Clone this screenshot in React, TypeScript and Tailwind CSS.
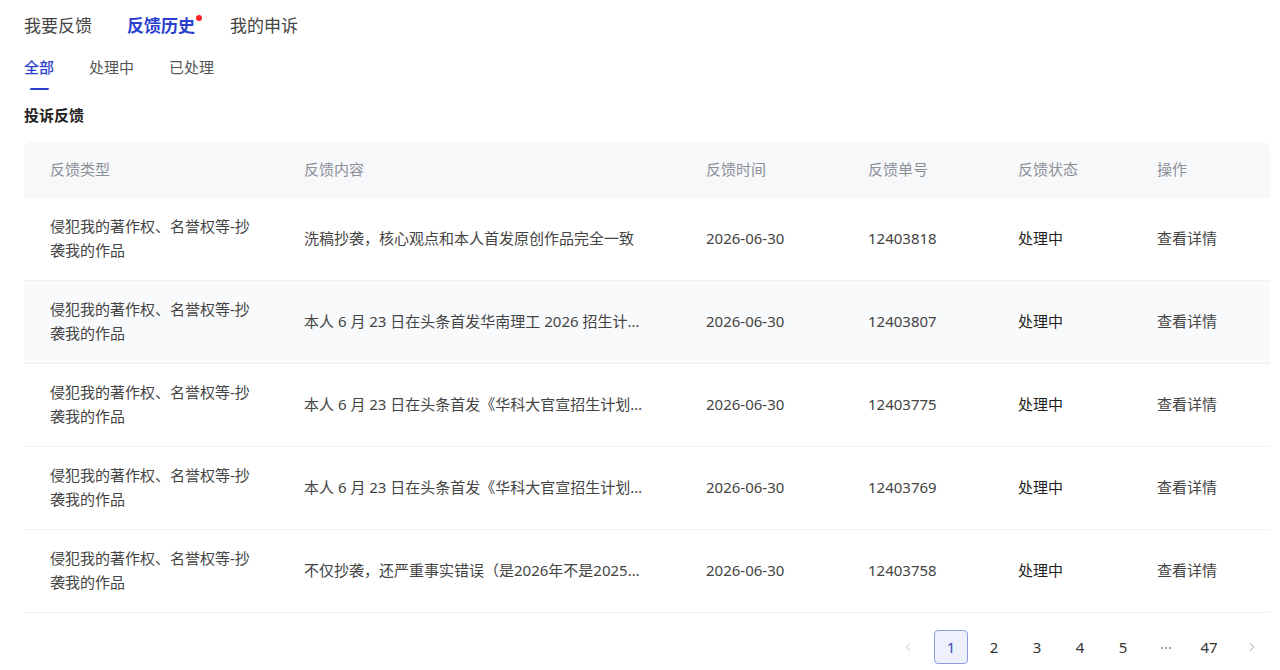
import { ChevronLeft, ChevronRight } from "lucide-react";

type FeedbackRow = {
  type: string;
  content: string;
  time: string;
  id: string;
  status: string;
};

const rows: FeedbackRow[] = [
  {
    type: "侵犯我的著作权、名誉权等-抄袭我的作品",
    content: "洗稿抄袭，核心观点和本人首发原创作品完全一致",
    time: "2026-06-30",
    id: "12403818",
    status: "处理中",
  },
  {
    type: "侵犯我的著作权、名誉权等-抄袭我的作品",
    content: "本人 6 月 23 日在头条首发华南理工 2026 招生计划解读，对方原文照搬",
    time: "2026-06-30",
    id: "12403807",
    status: "处理中",
  },
  {
    type: "侵犯我的著作权、名誉权等-抄袭我的作品",
    content: "本人 6 月 23 日在头条首发《华科大官宣招生计划》一文",
    time: "2026-06-30",
    id: "12403775",
    status: "处理中",
  },
  {
    type: "侵犯我的著作权、名誉权等-抄袭我的作品",
    content: "本人 6 月 23 日在头条首发《华科大官宣招生计划》一文",
    time: "2026-06-30",
    id: "12403769",
    status: "处理中",
  },
  {
    type: "侵犯我的著作权、名誉权等-抄袭我的作品",
    content: "不仅抄袭，还严重事实错误（是2026年不是2025年）",
    time: "2026-06-30",
    id: "12403758",
    status: "处理中",
  },
];

const pages = ["1", "2", "3", "4", "5", "···", "47"];

export default function App() {
  return (
    <div className="min-h-[670px] bg-white font-['Noto_Sans','Noto_Sans_CJK_SC',sans-serif] text-[#333]">
      <div className="ml-6 w-[1246px]">
        {/* top tabs */}
        <div className="flex h-[52px] items-center gap-[35px] text-[17px] leading-6">
          <span className="text-[#444]">我要反馈</span>
          <span className="relative font-semibold text-[#2b3fce]">
            反馈历史
            <span className="absolute -right-[7px] top-[1px] h-[6px] w-[6px] rounded-full bg-[#f5222d]" />
          </span>
          <span className="text-[#444]">我的申诉</span>
        </div>

        {/* sub tabs */}
        <div className="flex gap-[35px] text-[15px] leading-6">
          <div className="flex flex-col items-center">
            <span className="pt-[3px] font-medium text-[#2b3fce]">全部</span>
            <span className="mt-[9px] h-[2px] w-[19px] rounded bg-[#2b3fce]" />
          </div>
          <span className="pt-[3px] text-[#555]">处理中</span>
          <span className="pt-[3px] text-[#555]">已处理</span>
        </div>

        <div className="mt-[13px] text-[15px] font-semibold leading-6 text-[#222]">
          投诉反馈
        </div>

        {/* table */}
        <div className="mt-[15px]">
          <div className="flex h-[56px] items-center rounded-t-lg bg-[#f7f8fa] pb-[2px] text-[15px] text-[#8c9099]">
            <div className="w-[254px] pl-[26px]">反馈类型</div>
            <div className="w-[402px] pl-[26px]">反馈内容</div>
            <div className="w-[162px] pl-[26px]">反馈时间</div>
            <div className="w-[150px] pl-[26px]">反馈单号</div>
            <div className="w-[139px] pl-[26px]">反馈状态</div>
            <div className="w-[139px] pl-[26px]">操作</div>
          </div>
          {rows.map((r, i) => (
            <div
              key={r.id}
              className={
                "flex h-[83px] items-center border-b border-[#f0f1f3] pb-[2px] text-[15px] leading-6 text-[#444] " +
                (i === 1 ? "bg-[#f9fafb]" : "bg-white")
              }
            >
              <div className="w-[254px] pl-[26px]">
                <div className="w-[204px]">{r.type}</div>
              </div>
              <div className="w-[402px] pl-[26px]">
                <div className="max-w-[342px] truncate">{r.content}</div>
              </div>
              <div className="w-[162px] pl-[26px]">{r.time}</div>
              <div className="w-[150px] pl-[26px]">{r.id}</div>
              <div className="w-[139px] pl-[26px] text-[#1f1f1f]">{r.status}</div>
              <div className="w-[139px] pl-[26px]">查看详情</div>
            </div>
          ))}
        </div>

        {/* pagination */}
        <div className="mt-[17px] flex justify-end gap-[9px] pr-px text-[15px] text-[#333]">
          <span className="flex h-[34px] w-[34px] items-center justify-center text-[#b5b8bf]">
            <ChevronLeft size={14} strokeWidth={1.5} />
          </span>
          {pages.map((p) => (
            <span
              key={p}
              className={
                "flex h-[34px] w-[34px] items-center justify-center rounded " +
                (p === "1"
                  ? "border border-[#8f9bdf] bg-[#eef1fd] text-[#3a4ab8]"
                  : p === "···"
                    ? "text-[#888]"
                    : "")
              }
            >
              {p}
            </span>
          ))}
          <span className="flex h-[34px] w-[34px] items-center justify-center text-[#8c9099]">
            <ChevronRight size={14} strokeWidth={1.5} />
          </span>
        </div>
      </div>
    </div>
  );
}
